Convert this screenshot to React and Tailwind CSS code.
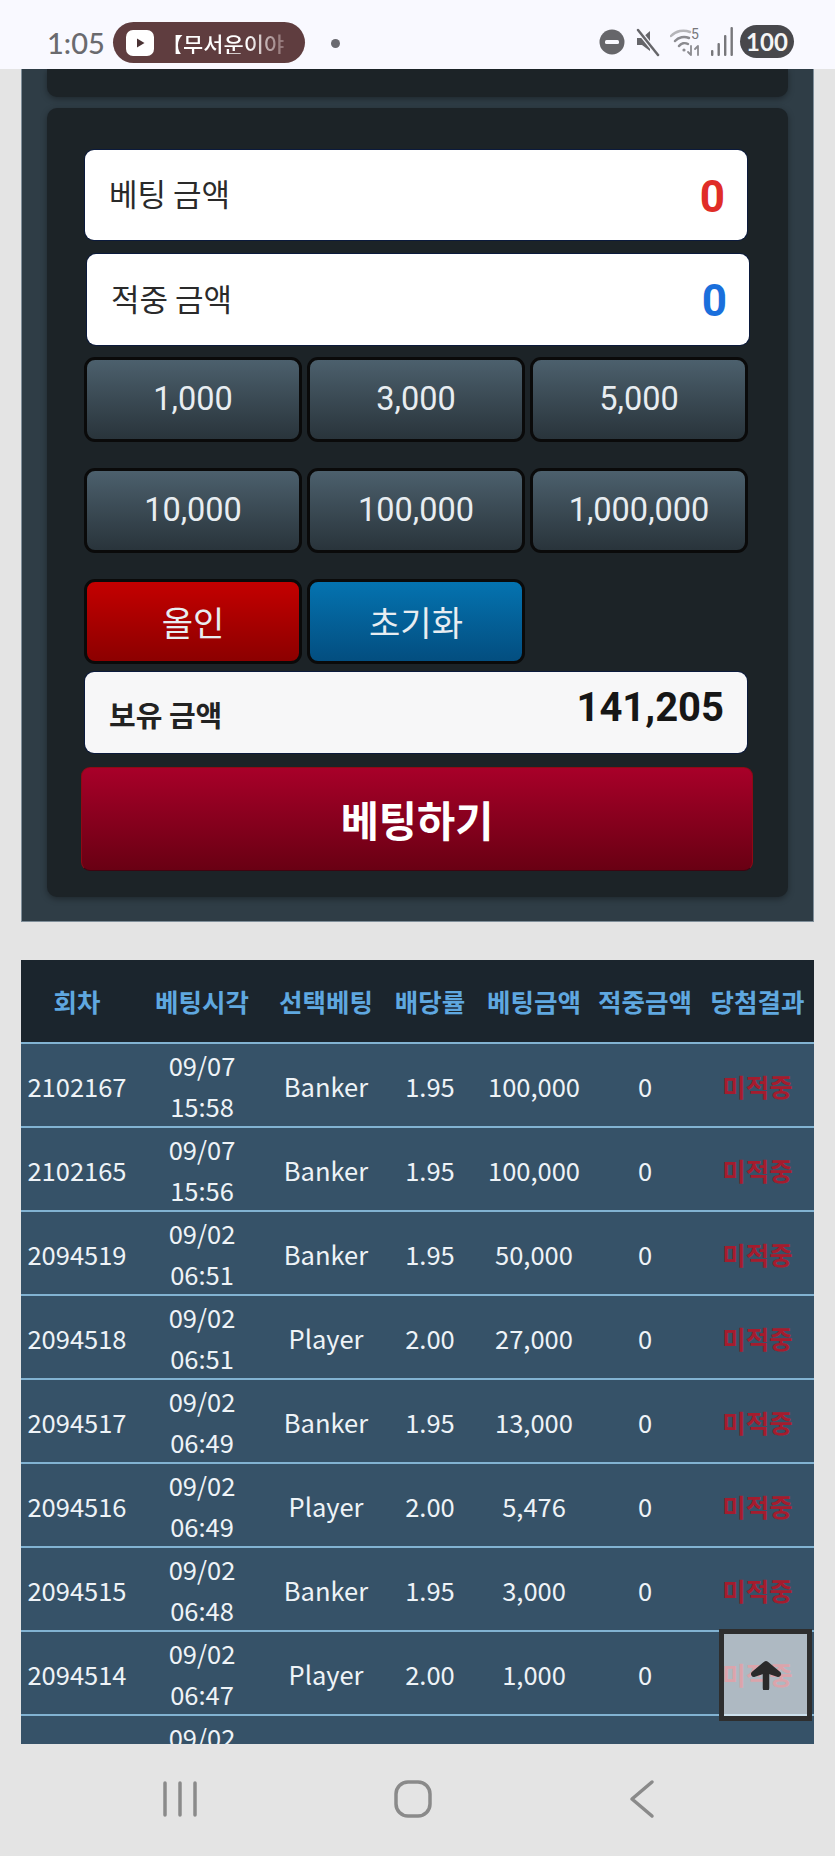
import React from 'react';

const amounts = ['1,000', '3,000', '5,000', '10,000', '100,000', '1,000,000'];

const headers = ['회차', '베팅시각', '선택베팅', '배당률', '베팅금액', '적중금액', '당첨결과'];

const rows = [
  ['2102167', '09/07', '15:58', 'Banker', '1.95', '100,000'],
  ['2102165', '09/07', '15:56', 'Banker', '1.95', '100,000'],
  ['2094519', '09/02', '06:51', 'Banker', '1.95', '50,000'],
  ['2094518', '09/02', '06:51', 'Player', '2.00', '27,000'],
  ['2094517', '09/02', '06:49', 'Banker', '1.95', '13,000'],
  ['2094516', '09/02', '06:49', 'Player', '2.00', '5,476'],
  ['2094515', '09/02', '06:48', 'Banker', '1.95', '3,000'],
  ['2094514', '09/02', '06:47', 'Player', '2.00', '1,000'],
  ['2094513', '09/02', '06:47', 'Banker', '1.95', '1,000'],
];

function StatusBar() {
  return (
    <div className="h-[69px] shrink-0 bg-[#f9f9ff] flex items-start pl-[47px] pr-[41px] pt-[22px]">
      <span className="mt-[5px] w-[66px] text-[29px] leading-[32px] font-medium text-[#6a6a6e] font-['Lato',sans-serif]">1:05</span>
      <div className="w-[192px] h-[41px] rounded-full bg-[#5f3d3f] flex items-center pl-[13px] overflow-hidden">
        <svg width="28" height="28" viewBox="0 0 28 28" className="shrink-0">
          <rect x="0" y="1" width="28" height="26" rx="7" fill="#fff" />
          <path d="M11 9.5 L18.5 14 L11 18.5 Z" fill="#4a3234" />
        </svg>
        <span className="ml-[7px] text-[22px] leading-none font-medium whitespace-nowrap text-transparent bg-clip-text bg-gradient-to-r from-white from-70% to-[#8d7072] font-['Noto_Sans_CJK_KR',sans-serif]">【무서운이야</span>
      </div>
      <div className="ml-[26px] mt-[17px] w-[9px] h-[9px] rounded-full bg-[#6a6a70]" />
      <div className="ml-auto flex items-center h-[41px] mt-[-1px]">
        <svg width="26" height="26" viewBox="0 0 26 26">
          <circle cx="13" cy="13" r="12.5" fill="#66666a" />
          <rect x="6" y="11" width="14" height="4" rx="1.5" fill="#f9f9ff" />
        </svg>
        <svg width="26" height="30" viewBox="0 0 26 30" className="ml-[9px]">
          <path d="M3 11h5l8-7v20l-8-6H3z" fill="#66666a" />
          <path d="M4 3 L24 28" stroke="#f9f9ff" strokeWidth="5" />
          <path d="M4 3 L24 28" stroke="#66666a" strokeWidth="2.5" strokeLinecap="round" />
        </svg>
        <svg width="34" height="32" viewBox="0 0 34 32" className="ml-[10px]" fill="none" stroke="#8b8b90" strokeLinecap="round">
          <path d="M1 10 A17 17 0 0 1 20 6" strokeWidth="2.5" stroke="#b5b5b9" />
          <path d="M5 15 A12 12 0 0 1 19 12" strokeWidth="2.5" />
          <path d="M9 20 A7 7 0 0 1 18 18" strokeWidth="2.5" />
          <circle cx="14" cy="24" r="1.6" fill="#8b8b90" stroke="none" />
          <path d="M21 20v9m-3-3 3 3M28 29v-9m-3 3 3-3" strokeWidth="1.8" />
          <text x="21" y="13" fontSize="14" fill="#77777b" stroke="none" fontFamily="Roboto, sans-serif">5</text>
        </svg>
        <svg width="22" height="34" viewBox="0 0 22 34" className="ml-[7px]" fill="#77777b">
          <rect x="0" y="25" width="2.4" height="6" rx="1" />
          <rect x="6.5" y="18" width="2.4" height="13" rx="1" />
          <rect x="13" y="10" width="2.4" height="21" rx="1" />
          <rect x="19.5" y="2" width="2.4" height="29" rx="1" />
        </svg>
        <div className="ml-[7px] w-[54px] h-[33px] rounded-full bg-[#48484c] flex items-center justify-center text-[24px] leading-none font-bold text-[#f5f5f5] font-['Lato',sans-serif]">100</div>
      </div>
    </div>
  );
}

function ValueField({ label, value, color, className }) {
  return (
    <div className={`w-[662px] rounded-[9px] bg-white shadow-[0_0_0_1px_#0b1a3c] flex items-center justify-between pl-[24px] pr-[22px] ${className}`}>
      <span className="text-[31px] mb-[3px] text-[#2a2a2a] font-['Noto_Sans_CJK_KR',sans-serif]">{label}</span>
      <span className={`text-[44px] font-bold mt-[3px] font-['Roboto',sans-serif] ${color}`}>{value}</span>
    </div>
  );
}

function AmountButton({ children, className = 'from-[#4c606d] to-[#29343b]', textSize = 'text-[32.5px]' }) {
  return (
    <button className={`h-[85px] rounded-[11px] border-[3px] border-[#0a0a0a] bg-gradient-to-b text-[#e8edf1] font-['Roboto','Noto_Sans_CJK_KR',sans-serif] ${textSize} ${className}`}>
      {children}
    </button>
  );
}

function BetPanel() {
  return (
    <div className="mx-[21px] bg-[#2f3d46] border-x border-b border-[#7f8e99] px-[25px] pb-[24px]">
      <div className="h-[28px] bg-[#1c2327] rounded-b-[10px] shadow-[0_2px_6px_rgba(0,0,0,0.35)]" />
      <div className="mt-[11px] bg-[#1c2327] rounded-[10px] pt-[42px] pb-[26px] pl-[38px] shadow-[0_2px_6px_rgba(0,0,0,0.35)]">
        <ValueField label="베팅 금액" value="0" color="text-[#e02d27]" className="h-[90px]" />
        <ValueField label="적중 금액" value="0" color="text-[#1a6fdc]" className="h-[91px] mt-[14px] ml-[2px]" />
        <div className="mt-[12px] ml-[-1px] w-[664px] grid grid-cols-3 gap-x-[5px] gap-y-[26px]">
          {amounts.map((a) => (
            <AmountButton key={a}>{a}</AmountButton>
          ))}
        </div>
        <div className="mt-[26px] ml-[-1px] w-[664px] grid grid-cols-3 gap-x-[5px]">
          <AmountButton className="from-[#c40000] to-[#8c0000] pt-[5px]" textSize="text-[34px]">올인</AmountButton>
          <AmountButton className="from-[#0473b0] to-[#034e80] pt-[5px]" textSize="text-[34px]">초기화</AmountButton>
        </div>
        <div className="mt-[8px] w-[662px] h-[81px] rounded-[9px] bg-[#f7f7f8] shadow-[0_0_0_1px_#0b1a3c] flex items-center justify-between pl-[24px] pr-[23px]">
          <span className="text-[29px] font-bold text-[#222] mt-[4px] font-['Noto_Sans_CJK_KR',sans-serif]">보유 금액</span>
          <span className="text-[40px] font-bold text-[#161616] mb-[10px] font-['Roboto',sans-serif]">141,205</span>
        </div>
        <button className="mt-[14px] ml-[-4px] w-[672px] h-[104px] rounded-[9px] border border-[#8e0a14] border-b-[#3e0410] bg-gradient-to-b from-[#a80029] to-[#690013] text-[41.5px] font-bold text-white font-['Noto_Sans_CJK_KR',sans-serif]">
          베팅하기
        </button>
      </div>
    </div>
  );
}

function HistoryTable() {
  return (
    <table className="mt-[38px] ml-[21px] w-[793px] table-fixed border-collapse text-center font-['Noto_Sans_CJK_KR',sans-serif]">
      <colgroup>
        <col className="w-[112px]" />
        <col className="w-[138px]" />
        <col className="w-[110px]" />
        <col className="w-[98px]" />
        <col className="w-[110px]" />
        <col className="w-[112px]" />
        <col className="w-[113px]" />
      </colgroup>
      <thead>
        <tr className="h-[83px] bg-[#1b252d]">
          {headers.map((h) => (
            <th key={h} className="p-0 text-[25.5px] font-bold text-[#5fa8e0] whitespace-nowrap">{h}</th>
          ))}
        </tr>
      </thead>
      <tbody>
        {rows.map((r) => (
          <tr key={r[0]} className="bg-[#365268] border-t-[2px] border-[#82b3d2] text-[25.5px] leading-[41px] text-[#eef3f7]">
            <td className="p-0">{r[0]}</td>
            <td className="p-0">{r[1]}<br />{r[2]}</td>
            <td className="p-0">{r[3]}</td>
            <td className="p-0">{r[4]}</td>
            <td className="p-0">{r[5]}</td>
            <td className="p-0">0</td>
            <td className="p-0 font-bold text-[#a51c2e]">미적중</td>
          </tr>
        ))}
      </tbody>
    </table>
  );
}

function NavBar() {
  return (
    <div className="h-[112px] shrink-0 bg-[#e4e4e4] flex items-start pt-[37px] pl-[163px]">
      <svg width="34" height="36" viewBox="0 0 34 36" fill="none" stroke="#8a8a8a" strokeWidth="3.5" strokeLinecap="round">
        <path d="M2 2v32M17 2v32M32 2v32" />
      </svg>
      <svg width="38" height="38" viewBox="0 0 38 38" fill="none" stroke="#8a8a8a" strokeWidth="3.5" className="ml-[197px] mt-[-1px]">
        <rect x="2" y="2" width="34" height="34" rx="12" />
      </svg>
      <svg width="26" height="40" viewBox="0 0 26 40" fill="none" stroke="#8a8a8a" strokeWidth="3.5" strokeLinecap="round" strokeLinejoin="round" className="ml-[197px] mt-[-2px]">
        <path d="M23 3 L3 20 L23 37" />
      </svg>
    </div>
  );
}

export default function App() {
  return (
    <div className="relative w-[835px] h-[1856px] flex flex-col overflow-hidden bg-[#e4e4e4]">
      <StatusBar />
      <div className="flex-1 overflow-hidden">
        <BetPanel />
        <HistoryTable />
      </div>
      <NavBar />
      {/* scroll to top */}
      <button className="absolute left-[719px] top-[1629px] w-[93px] h-[92px] border-[5px] border-[#2e2e2e] bg-white/60 flex items-center justify-center">
        <svg width="32" height="30" viewBox="0 0 32 30" fill="none" stroke="#2a2a2a" strokeLinecap="round" strokeLinejoin="round">
          <path d="M16 28V8" strokeWidth="6.5" />
          <path d="M4 14 L16 4 L28 14 L16 10 Z" fill="#2a2a2a" strokeWidth="6" />
        </svg>
      </button>
    </div>
  );
}
